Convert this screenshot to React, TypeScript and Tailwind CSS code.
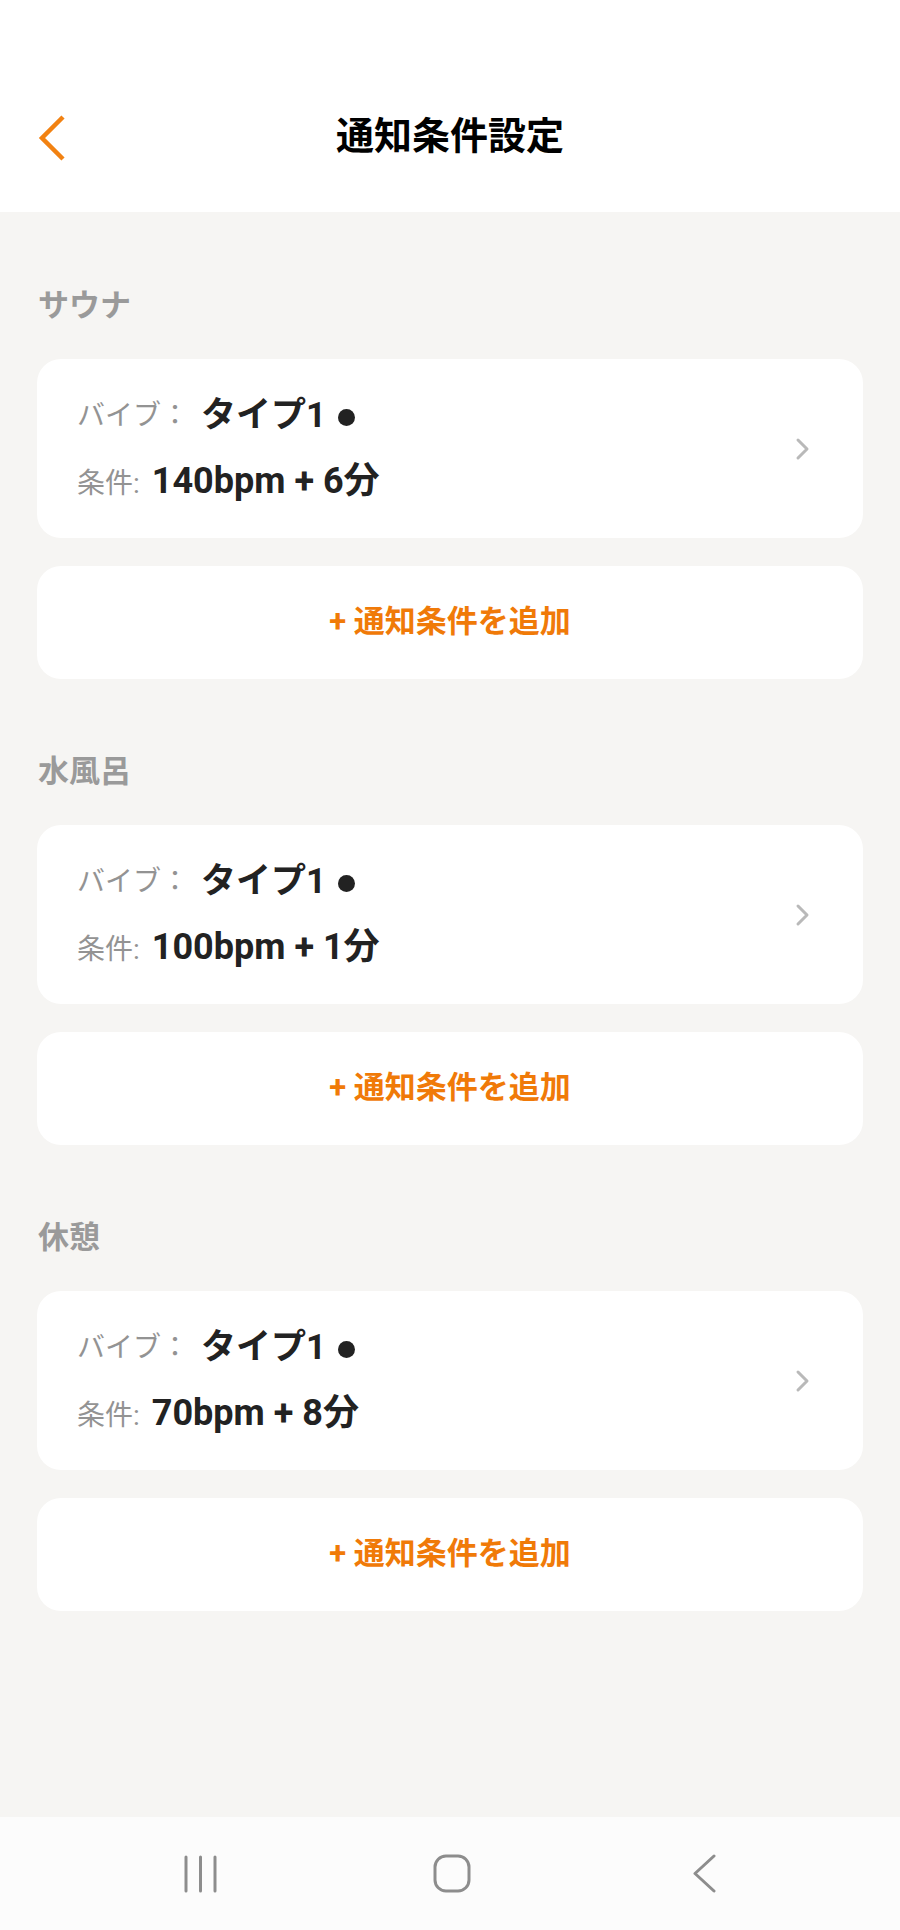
import React from "react";

const FONT = "font-['Roboto','Noto_Sans_CJK_JP',sans-serif]";

type Item = { title: string; value: string };

const items: Item[] = [
  { title: "サウナ", value: "140bpm + 6分" },
  { title: "水風呂", value: "100bpm + 1分" },
  { title: "休憩", value: "70bpm + 8分" },
];

function Section({ item }: { item: Item }) {
  return (
    <div className="flex flex-col">
      <div className="h-[40px] flex items-center pl-[38px] pb-[5px] text-[31px] font-bold text-[#9a9a9a] leading-none">
        {item.title}
      </div>
      <div className="mt-[31px] mx-[37px] h-[179px] bg-white rounded-[24px] flex items-center justify-between pl-[40px] pr-[52px]">
        <div className="flex flex-col gap-[18px] mb-[7px]">
          <div className="h-[40px] flex items-center">
            <span className="text-[28px] text-[#939393] font-normal">バイブ：</span>
            <span className="ml-[12px] text-[35px] font-bold text-[#222222]">タイプ1</span>
            <span className="ml-[12px] mt-[2px] w-[17px] h-[17px] rounded-full bg-[#222222] inline-block"></span>
          </div>
          <div className="h-[40px] flex items-baseline">
            <span className="text-[28px] text-[#939393] font-normal">条件:</span>
            <span className="ml-[12px] text-[36px] font-bold text-[#222222]">{item.value}</span>
          </div>
        </div>
        <svg width="16" height="24" viewBox="0 0 16 24" fill="none">
          <path d="M3 3 L12 12 L3 21" stroke="#b9b9b9" strokeWidth="3" strokeLinecap="round" strokeLinejoin="round" />
        </svg>
      </div>
      <div className="mt-[28px] mx-[37px] h-[113px] bg-white rounded-[24px] flex items-center justify-center">
        <span className="text-[31px] font-bold text-[#f07a08]">+ 通知条件を追加</span>
      </div>
    </div>
  );
}

export default function App() {
  return (
    <div className={`w-[900px] h-[1930px] flex flex-col bg-[#f6f5f3] ${FONT}`}>
      <header className="bg-white h-[212px] flex flex-col">
        <div className="h-[80px]" />
        <div className="h-[112px] relative flex items-center justify-center">
          <svg className="absolute left-[34px] top-[33px]" width="34" height="50" viewBox="0 0 34 50" fill="none">
            <path d="M29 4 L8 25 L29 46" stroke="#f28212" strokeWidth="4.5" strokeLinecap="butt" strokeLinejoin="miter" />
          </svg>
          <h1 className="text-[38px] font-bold text-black leading-none">通知条件設定</h1>
        </div>
      </header>
      <main className="flex-1 flex flex-col pt-[76px] gap-[75px]">
        {items.map((it) => (
          <Section key={it.title} item={it} />
        ))}
      </main>
      <nav className="h-[113px] bg-[#fcfcfc] flex items-center pl-[74px]">
        <div className="w-[252px] flex justify-center">
          <svg width="40" height="40" viewBox="0 0 40 40" fill="none">
            <path d="M6 3 V37 M20.5 3 V37 M35 3 V37" stroke="#8d8d8d" strokeWidth="3" strokeLinecap="round" />
          </svg>
        </div>
        <div className="w-[252px] flex justify-center">
          <svg width="40" height="40" viewBox="0 0 40 40" fill="none">
            <rect x="3" y="2" width="34" height="35" rx="11" stroke="#8d8d8d" strokeWidth="3" />
          </svg>
        </div>
        <div className="w-[252px] flex justify-center">
          <svg width="30" height="40" viewBox="0 0 30 40" fill="none">
            <path d="M25 2 L6 19.5 L25 37" stroke="#8d8d8d" strokeWidth="3" strokeLinecap="round" strokeLinejoin="round" />
          </svg>
        </div>
      </nav>
    </div>
  );
}
